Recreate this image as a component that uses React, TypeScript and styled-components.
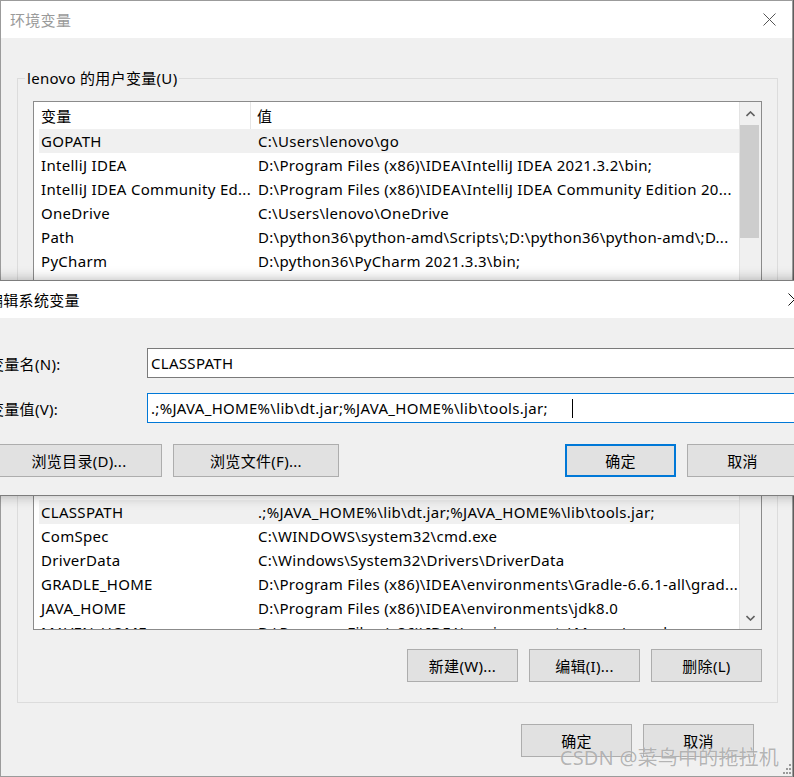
import React from "react";
import styled, { createGlobalStyle } from "styled-components";

const FONT = `"Noto Sans", "Noto Sans CJK SC", sans-serif`;

const GlobalStyle = createGlobalStyle`
  html, body { margin: 0; padding: 0; overflow: hidden; background: #5e5e5e; }
  body { font-family: ${FONT}; }
  *, *::before, *::after { box-sizing: border-box; }
`;

const Window = styled.div`
  position: relative;
  width: 793px;
  height: 777px;
  border: 1px solid #9b9b9b;
  background: #f0f0f0;
  display: flex;
  flex-direction: column;
  font-family: ${FONT};
  font-size: 15px;
  letter-spacing: 0.3px;
  color: #000;
  overflow: visible;
`;

const TitleBar = styled.div`
  height: 37px;
  flex: none;
  background: #fff;
  display: flex;
  align-items: center;
  justify-content: space-between;
  padding-left: 9px;
`;

const TitleText = styled.span<{ $inactive?: boolean }>`
  font-size: 15px;
  color: ${(p) => (p.$inactive ? "#9a9a9a" : "#000")};
  white-space: nowrap;
`;

const CloseBox = styled.div`
  width: 46px;
  height: 100%;
  display: flex;
  align-items: center;
  justify-content: center;
  flex: none;
`;

const WindowBody = styled.div`
  flex: 1;
  display: flex;
  flex-direction: column;
  padding: 30px 14px 0 16px;
`;

const Group = styled.fieldset`
  margin: 0;
  padding: 0 15px 20px 15px;
  border: 1px solid #dcdcdc;
  min-width: 0;
  & + & {
    margin-top: 3px;
  }
`;

const Legend = styled.legend`
  margin-left: -8px;
  padding: 0 2px;
  line-height: 20px;
  font-size: 15px;
`;

const ListBox = styled.div<{ $h: number }>`
  margin-top: 13px;
  height: ${(p) => p.$h}px;
  border: 1px solid #8b8b8b;
  background: #fff;
  display: flex;
  overflow: hidden;
`;

const TableArea = styled.div`
  flex: 1;
  min-width: 0;
  display: flex;
  flex-direction: column;
  overflow: hidden;
`;

const HeaderRow = styled.div`
  height: 27px;
  flex: none;
  display: flex;
  align-items: center;
`;

const HeaderCell = styled.div<{ $first?: boolean }>`
  height: 100%;
  display: flex;
  align-items: center;
  padding-left: ${(p) => (p.$first ? 7 : 6)}px;
  width: ${(p) => (p.$first ? "217px" : "auto")};
  flex: ${(p) => (p.$first ? "none" : "1")};
  border-right: ${(p) => (p.$first ? "1px solid #e5e5e5" : "none")};
`;

const Row = styled.div<{ $selected?: boolean }>`
  height: 24px;
  flex: none;
  margin-left: 5px;
  display: flex;
  align-items: center;
  background: ${(p) => (p.$selected ? "#f0f0f0" : "transparent")};
  white-space: nowrap;
`;

const NameCell = styled.div`
  width: 212px;
  flex: none;
  padding-left: 2px;
  overflow: hidden;
`;

const ValueCell = styled.div`
  flex: 1;
  padding-left: 7px;
  overflow: hidden;
`;

const ScrollBar = styled.div`
  width: 22px;
  flex: none;
  background: #f0f0f0;
  border-left: 1px solid #e3e3e3;
  display: flex;
  flex-direction: column;
`;

const ArrowBtn = styled.div`
  height: 23px;
  flex: none;
  display: flex;
  align-items: center;
  justify-content: center;
`;

const Track = styled.div<{ $offset: number }>`
  flex: 1;
  padding-top: ${(p) => p.$offset}px;
`;

const Thumb = styled.div<{ $h: number }>`
  height: ${(p) => p.$h}px;
  margin: 0 2px 0 0;
  background: #cdcdcd;
`;

const ButtonRow = styled.div<{ $gap: number; $top: number }>`
  display: flex;
  justify-content: flex-end;
  gap: ${(p) => p.$gap}px;
  margin-top: ${(p) => p.$top}px;
`;

const Button = styled.button<{ $w: number; $primary?: boolean }>`
  width: ${(p) => p.$w}px;
  height: 33px;
  flex: none;
  padding: 0;
  background: #e1e1e1;
  border: ${(p) => (p.$primary ? "2px solid #0078d7" : "1px solid #adadad")};
  font-family: ${FONT};
  font-size: 15px;
  letter-spacing: 0.3px;
  color: #000;
  white-space: nowrap;
`;

const Footer = styled(ButtonRow)`
  margin-right: 24px;
`;

const Dialog = styled.div`
  position: absolute;
  left: -25px;
  top: 279px;
  width: 842px;
  border: 1px solid #7d7d7d;
  background: #f0f0f0;
  box-shadow: 0 0 12px rgba(0, 0, 0, 0.3);
  display: flex;
  flex-direction: column;
`;

const DialogTitle = styled(TitleBar)`
  padding-left: 11px;
`;

const DialogBody = styled.div`
  padding: 30px 19px 18px 12px;
  display: flex;
  flex-direction: column;
`;

const FormGrid = styled.div`
  display: grid;
  grid-template-columns: 158px 1fr;
  row-gap: 15px;
  align-items: center;
`;

const FieldLabel = styled.label`
  font-size: 15px;
  white-space: nowrap;
`;

const TextBox = styled.div<{ $focused?: boolean }>`
  height: 30px;
  background: #fff;
  border: 1px solid ${(p) => (p.$focused ? "#0078d7" : "#7a7a7a")};
  padding-left: 3px;
  display: flex;
  align-items: center;
  white-space: pre;
`;

const Caret = styled.span`
  display: inline-block;
  width: 1px;
  height: 19px;
  background: #000;
  margin-left: 24px;
`;

const DialogButtons = styled.div`
  display: flex;
  gap: 11px;
  margin-top: 21px;
  padding-left: 7px;
`;

const Spacer = styled.div`
  flex: 1;
`;

const Watermark = styled.div`
  position: absolute;
  right: 13px;
  bottom: 6px;
  line-height: 24px;
  font-size: 20px;
  letter-spacing: 0.2px;
  color: rgba(120, 120, 120, 0.55);
  text-shadow: 0 0 1px rgba(255, 255, 255, 0.8);
  white-space: nowrap;
  pointer-events: none;
`;

const Grip = styled.div`
  position: absolute;
  right: 1px;
  bottom: 2px;
  line-height: 0;
`;

const CloseIcon = ({ color }: { color: string }) => (
  <svg width="13" height="13" viewBox="0 0 13 13">
    <path d="M0.5 0.5 L12.5 12.5 M12.5 0.5 L0.5 12.5" stroke={color} strokeWidth="1" fill="none" />
  </svg>
);

const Chevron = ({ down }: { down?: boolean }) => (
  <svg width="9" height="6" viewBox="0 0 9 6">
    <polyline
      points={down ? "0.5,1 4.5,5 8.5,1" : "0.5,5 4.5,1 8.5,5"}
      stroke="#606060"
      strokeWidth="1.6"
      fill="none"
    />
  </svg>
);

type Item = { name: string; value: string; selected?: boolean };

const userVars: Item[] = [
  { name: "GOPATH", value: "C:\\Users\\lenovo\\go", selected: true },
  { name: "IntelliJ IDEA", value: "D:\\Program Files (x86)\\IDEA\\IntelliJ IDEA 2021.3.2\\bin;" },
  {
    name: "IntelliJ IDEA Community Ed...",
    value: "D:\\Program Files (x86)\\IDEA\\IntelliJ IDEA Community Edition 20...",
  },
  { name: "OneDrive", value: "C:\\Users\\lenovo\\OneDrive" },
  { name: "Path", value: "D:\\python36\\python-amd\\Scripts\\;D:\\python36\\python-amd\\;D..." },
  { name: "PyCharm", value: "D:\\python36\\PyCharm 2021.3.3\\bin;" },
  { name: "PyCharm Community Edition", value: "D:\\python36\\PyCharm Community Edition 2019.3\\bin;" },
  { name: "TEMP", value: "C:\\Users\\lenovo\\AppData\\Local\\Temp" },
];

const sysVars: Item[] = [
  { name: "ACSvcPort", value: "17532" },
  { name: "ANDROID_HOME", value: "D:\\Android\\sdk" },
  { name: "CLASSPATH", value: ".;%JAVA_HOME%\\lib\\dt.jar;%JAVA_HOME%\\lib\\tools.jar;", selected: true },
  { name: "ComSpec", value: "C:\\WINDOWS\\system32\\cmd.exe" },
  { name: "DriverData", value: "C:\\Windows\\System32\\Drivers\\DriverData" },
  { name: "GRADLE_HOME", value: "D:\\Program Files (x86)\\IDEA\\environments\\Gradle-6.6.1-all\\grad..." },
  { name: "JAVA_HOME", value: "D:\\Program Files (x86)\\IDEA\\environments\\jdk8.0" },
  { name: "MAVEN_HOME", value: "D:\\Program Files (x86)\\IDEA\\environments\\Maven\\apache-mav..." },
];

const VarList = ({
  items,
  height,
  thumbOffset,
  thumbHeight,
}: {
  items: Item[];
  height: number;
  thumbOffset: number;
  thumbHeight: number;
}) => (
  <ListBox $h={height}>
    <TableArea>
      <HeaderRow>
        <HeaderCell $first>变量</HeaderCell>
        <HeaderCell>值</HeaderCell>
      </HeaderRow>
      {items.map((it) => (
        <Row key={it.name} $selected={it.selected}>
          <NameCell>{it.name}</NameCell>
          <ValueCell>{it.value}</ValueCell>
        </Row>
      ))}
    </TableArea>
    <ScrollBar>
      <ArrowBtn>
        <Chevron />
      </ArrowBtn>
      <Track $offset={thumbOffset}>
        <Thumb $h={thumbHeight} />
      </Track>
      <ArrowBtn>
        <Chevron down />
      </ArrowBtn>
    </ScrollBar>
  </ListBox>
);

export default function App() {
  return (
    <>
      <GlobalStyle />
      <Window>
        <TitleBar>
          <TitleText $inactive>环境变量</TitleText>
          <CloseBox>
            <CloseIcon color="#555" />
          </CloseBox>
        </TitleBar>
        <WindowBody>
          <Group>
            <Legend>lenovo 的用户变量(U)</Legend>
            <VarList items={userVars} height={214} thumbOffset={0} thumbHeight={113} />
            <ButtonRow $gap={11} $top={19}>
              <Button $w={111}>新建(N)...</Button>
              <Button $w={111}>编辑(E)...</Button>
              <Button $w={111}>删除(D)</Button>
            </ButtonRow>
          </Group>
          <Group>
            <Legend>系统变量(S)</Legend>
            <VarList items={sysVars} height={206} thumbOffset={0} thumbHeight={40} />
            <ButtonRow $gap={11} $top={19}>
              <Button $w={111}>新建(W)...</Button>
              <Button $w={111}>编辑(I)...</Button>
              <Button $w={111}>删除(L)</Button>
            </ButtonRow>
          </Group>
          <Footer $gap={11} $top={21}>
            <Button $w={111}>确定</Button>
            <Button $w={111}>取消</Button>
          </Footer>
        </WindowBody>

        <Dialog>
          <DialogTitle>
            <TitleText>编辑系统变量</TitleText>
            <CloseBox>
              <CloseIcon color="#111" />
            </CloseBox>
          </DialogTitle>
          <DialogBody>
            <FormGrid>
              <FieldLabel>变量名(N):</FieldLabel>
              <TextBox>CLASSPATH</TextBox>
              <FieldLabel>变量值(V):</FieldLabel>
              <TextBox $focused>
                {".;%JAVA_HOME%\\lib\\dt.jar;%JAVA_HOME%\\lib\\tools.jar;"}
                <Caret />
              </TextBox>
            </FormGrid>
            <DialogButtons>
              <Button $w={166}>浏览目录(D)...</Button>
              <Button $w={166}>浏览文件(F)...</Button>
              <Spacer />
              <Button $w={111} $primary>
                确定
              </Button>
              <Button $w={111}>取消</Button>
            </DialogButtons>
          </DialogBody>
        </Dialog>

        <Watermark>CSDN @菜鸟中的拖拉机</Watermark>
        <Grip>
          <svg width="8" height="12" viewBox="0 0 8 12">
            {[
              [6, 2],
              [6, 6],
              [3, 6],
              [6, 10],
              [3, 10],
              [0, 10],
            ].map(([x, y], i) => (
              <rect key={i} x={x} y={y} width="2" height="2" fill="#9a9a9a" />
            ))}
          </svg>
        </Grip>
      </Window>
    </>
  );
}
